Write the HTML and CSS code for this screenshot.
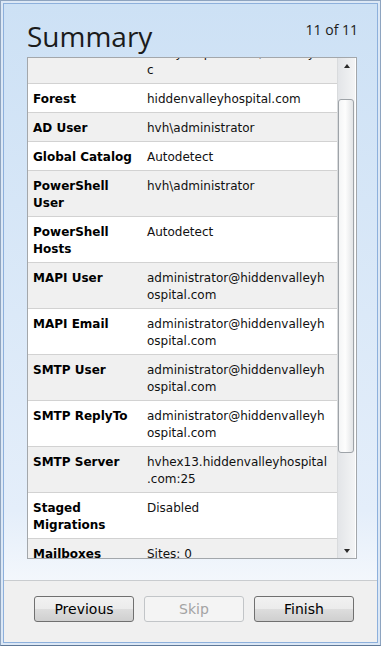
FILE: index.html
```html
<!DOCTYPE html>
<html lang="en">
<head>
    <meta charset="UTF-8">
    <meta name="viewport" content="width=device-width, initial-scale=1.0">
    <title>Summary</title>
    <link rel="stylesheet" href="styles.css">
</head>
<body>
    <div class="window">
        <div class="frame">
            <div class="page">
                <div class="header">
                    <h1>Summary</h1>
                    <span class="step">11 of 11</span>
                </div>

                <div class="panel">
                    <div class="rows">
                        <!-- list is scrolled: only the tail of this row shows -->
                        <div class="row gray first">
                            <div class="label"></div>
                            <div class="value">valleyhospital.com/autodisy,<br>c</div>
                        </div>
                        <div class="row">
                            <div class="label">Forest</div>
                            <div class="value">hiddenvalleyhospital.com</div>
                        </div>
                        <div class="row gray">
                            <div class="label">AD User</div>
                            <div class="value">hvh\administrator</div>
                        </div>
                        <div class="row">
                            <div class="label">Global Catalog</div>
                            <div class="value">Autodetect</div>
                        </div>
                        <div class="row gray">
                            <div class="label">PowerShell User</div>
                            <div class="value">hvh\administrator</div>
                        </div>
                        <div class="row">
                            <div class="label">PowerShell Hosts</div>
                            <div class="value">Autodetect</div>
                        </div>
                        <div class="row gray">
                            <div class="label">MAPI User</div>
                            <div class="value">administrator@hiddenvalleyhospital.com</div>
                        </div>
                        <div class="row">
                            <div class="label">MAPI Email</div>
                            <div class="value">administrator@hiddenvalleyhospital.com</div>
                        </div>
                        <div class="row gray">
                            <div class="label">SMTP User</div>
                            <div class="value">administrator@hiddenvalleyhospital.com</div>
                        </div>
                        <div class="row">
                            <div class="label">SMTP ReplyTo</div>
                            <div class="value">administrator@hiddenvalleyhospital.com</div>
                        </div>
                        <div class="row gray">
                            <div class="label">SMTP Server</div>
                            <div class="value">hvhex13.hiddenvalleyhospital<wbr>.com:25</div>
                        </div>
                        <div class="row">
                            <div class="label">Staged Migrations</div>
                            <div class="value">Disabled</div>
                        </div>
                        <div class="row gray">
                            <div class="label">Mailboxes</div>
                            <div class="value">Sites: 0</div>
                        </div>
                    </div>

                    <div class="scrollbar">
                        <div class="arrow up"></div>
                        <div class="track">
                            <div class="thumb"></div>
                        </div>
                        <div class="arrow down"></div>
                    </div>
                </div>
            </div>

            <div class="footer">
                <button class="btn">Previous</button>
                <button class="btn" disabled>Skip</button>
                <button class="btn">Finish</button>
            </div>
        </div>
    </div>
</body>
</html>
```

FILE: styles.css
```css
* {
    margin: 0;
    padding: 0;
    box-sizing: border-box;
}

body {
    font-family: 'DejaVu Sans', Verdana, sans-serif;
    background: #dfeaf7;
}

.window {
    width: 381px;
    height: 646px;
    border: 1px solid #8ea4c0;
    border-bottom-color: #5f7896;
    padding: 2px;
    background: #dce8f6;
}

.frame {
    height: 100%;
    border: 1px solid #8db0dc;
    display: flex;
    flex-direction: column;
}

.page {
    background: linear-gradient(to bottom, #cde1f5, #e4eefa 88%, #f3f7fc);
    padding: 0 20px 21px 23px;
}

.header {
    height: 53px;
    padding-top: 13px;
    display: flex;
    justify-content: space-between;
    align-items: flex-start;
}

h1 {
    font-family: 'Open Sans', 'Noto Sans', sans-serif;
    font-weight: normal;
    font-size: 28px;
    line-height: 38px;
    color: #1b1b1b;
}

.step {
    font-family: 'Open Sans', 'Noto Sans', sans-serif;
    font-size: 14px;
    line-height: 19px;
    margin-top: 3px;
    margin-right: -1px;
    color: #1b1b1b;
}

.panel {
    height: 502px;
    border: 1px solid #a3a7ab;
    background: #fff;
    display: flex;
    overflow: hidden;
}

.rows {
    width: 309px;
    overflow: hidden;
}

.row {
    display: flex;
    background: #fff;
    border-bottom: 1px solid #d2d2d2;
    font-size: 12px;
    line-height: 17px;
    color: #111;
}

.row.gray {
    background: #f0f0f0;
}

.row.first {
    margin-top: -20px;
}

.label {
    width: 114px;
    flex-shrink: 0;
    padding: 7px 5px 4px 5px;
    font-weight: bold;
    color: #000;
}

.value {
    flex: 1;
    padding: 7px 8px 4px 5px;
    word-break: break-all;
}

.scrollbar {
    width: 18px;
    display: flex;
    flex-direction: column;
    background: linear-gradient(to right, #e3e5e8, #f3f4f5);
    border-left: 1px solid #d9dbdd;
}

.arrow {
    height: 17px;
    display: flex;
    align-items: center;
    justify-content: center;
}

.arrow::after {
    content: '';
    border-left: 3.5px solid transparent;
    border-right: 3.5px solid transparent;
}

.arrow.up::after {
    border-bottom: 4px solid #2a2a2a;
    margin-top: -2px;
}

.arrow.down::after {
    border-top: 4px solid #2a2a2a;
    margin-top: 2px;
}

.track {
    flex: 1;
    padding-top: 24px;
}

.thumb {
    height: 354px;
    margin: 0 1px 0 0;
    border: 1px solid #9ea3a8;
    border-radius: 3px;
    background: linear-gradient(to right, #f4f5f6, #fdfdfd 45%, #e2e4e6);
}

.footer {
    flex: 1;
    border-top: 1px solid #c9cccf;
    background: #f0f0f0;
    padding: 15px 0 0 30px;
    display: flex;
    align-items: flex-start;
    gap: 10px;
}

.btn {
    width: 100px;
    height: 26px;
    border: 1px solid #707070;
    border-radius: 3px;
    background: linear-gradient(to bottom, #f2f2f2, #ebebeb 50%, #dddddd 51%, #cfcfcf);
    font-family: 'DejaVu Sans', Verdana, sans-serif;
    font-size: 14px;
    color: #000;
}

.btn:disabled {
    border-color: #c2c5c8;
    background: #f4f4f4;
    color: #a3a3a3;
}
```
